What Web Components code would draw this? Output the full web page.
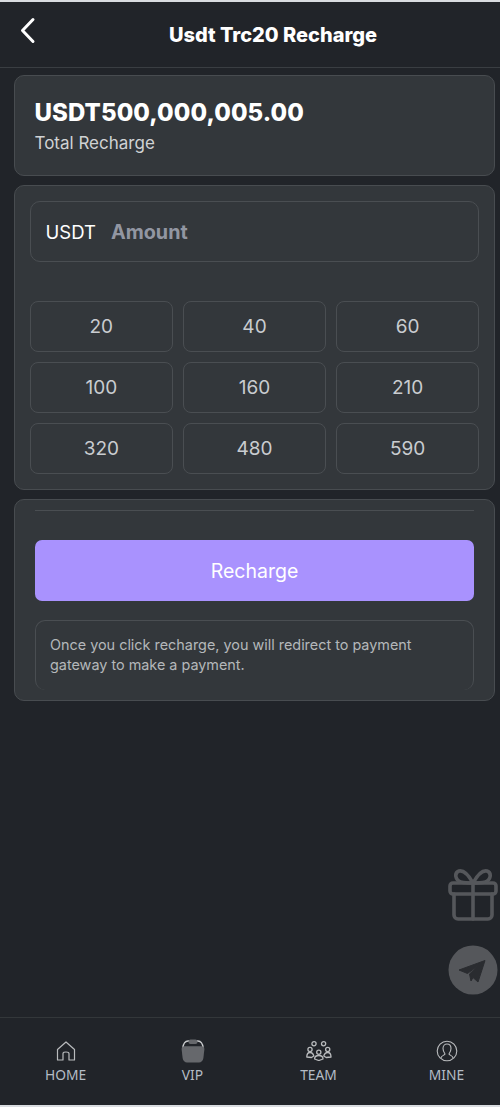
<!DOCTYPE html>
<html>
<head>
<meta charset="utf-8">
<title>Usdt Trc20 Recharge</title>
<style>
    html, body { margin: 0; padding: 0; height: 100%; background: #212429; }
    body { font-family: "Inter", "Roboto", "Liberation Sans", sans-serif; }
</style>
</head>
<body>
<recharge-app>
    <top-bar>Usdt Trc20 Recharge</top-bar>
    <total-card amount="USDT500,000,005.00" label="Total Recharge"></total-card>
    <amount-card values="20,40,60,100,160,210,320,480,590"></amount-card>
    <pay-card>Once you click recharge, you will redirect to payment gateway to make a payment.</pay-card>
    <float-links></float-links>
    <bottom-nav></bottom-nav>
</recharge-app>

<script>
    const cardCss = `
        .card {
            background: #33373b;
            border: 1px solid #484c50;
            border-radius: 10px;
            box-sizing: border-box;
        }
    `;

    class RechargeApp extends HTMLElement {
        constructor() {
            super();
            this.attachShadow({ mode: 'open' });
            this.shadowRoot.innerHTML = `
                <style>
                    :host {
                        display: flex;
                        flex-direction: column;
                        position: relative;
                        box-sizing: border-box;
                        width: 500px;
                        height: 1107px;
                        overflow: hidden;
                        background: #212429;
                        border-top: 2px solid #d9dce0;
                        border-bottom: 2px solid #d9dce0;
                    }
                </style>
                <slot></slot>
            `;
        }
    }

    class TopBar extends HTMLElement {
        constructor() {
            super();
            this.attachShadow({ mode: 'open' });
            this.shadowRoot.innerHTML = `
                <style>
                    :host {
                        display: flex;
                        flex: none;
                        align-items: center;
                        justify-content: center;
                        position: relative;
                        box-sizing: border-box;
                        height: 66px;
                        border-bottom: 1px solid #3a3e42;
                        color: #fff;
                        font: 800 20px "Inter", sans-serif;
                        padding-left: 46px;
                    }
                    svg { position: absolute; left: 18px; top: 15px; }
                </style>
                <svg width="18" height="28" viewBox="0 0 18 28" fill="none" stroke="#fff" stroke-width="3" stroke-linecap="round" stroke-linejoin="round">
                    <path d="M15 2.5 L4.5 13.5 L15 24.5"/>
                </svg>
                <slot></slot>
            `;
        }
    }

    class TotalCard extends HTMLElement {
        constructor() {
            super();
            this.attachShadow({ mode: 'open' });
        }
        connectedCallback() {
            this.shadowRoot.innerHTML = `
                <style>
                    ${cardCss}
                    :host { display: block; flex: none; margin: 7px 5px 0 14px; }
                    .card { height: 101px; padding: 22px 20px 0; }
                    .amount { color: #fff; font: 800 24px/30px "Inter", sans-serif; letter-spacing: 0.08px; margin-left: -0.5px; }
                    .label { color: #d0d2d4; font: 400 17px/22px "Inter", sans-serif; margin: 4px 0 0 -0.5px; }
                </style>
                <div class="card">
                    <div class="amount">${this.getAttribute('amount')}</div>
                    <div class="label">${this.getAttribute('label')}</div>
                </div>
            `;
        }
    }

    class AmountCard extends HTMLElement {
        constructor() {
            super();
            this.attachShadow({ mode: 'open' });
        }
        connectedCallback() {
            const values = this.getAttribute('values').split(',');
            const chips = values.map(v => `<div class="chip">${v}</div>`).join('');
            this.shadowRoot.innerHTML = `
                <style>
                    ${cardCss}
                    :host { display: block; flex: none; margin: 9px 5px 0 14px; }
                    .card { height: 305px; padding: 15px; }
                    .input {
                        display: flex;
                        align-items: center;
                        gap: 15px;
                        box-sizing: border-box;
                        height: 61px;
                        padding: 0 14.5px;
                        border: 1px solid #4a4e52;
                        border-radius: 10px;
                    }
                    .unit { color: #fff; font: 400 18.5px "Inter", sans-serif; }
                    .hint { color: #9296a2; font: 700 19.8px "Inter", sans-serif; }
                    .chips {
                        display: grid;
                        grid-template-columns: repeat(3, 1fr);
                        gap: 10px 10.5px;
                        margin-top: 39px;
                    }
                    .chip {
                        display: flex;
                        align-items: center;
                        justify-content: center;
                        box-sizing: border-box;
                        height: 51px;
                        border: 1px solid #4a4e52;
                        border-radius: 8px;
                        color: #c9ccd0;
                        font: 400 19px "Inter", sans-serif;
                    }
                </style>
                <div class="card">
                    <div class="input"><span class="unit">USDT</span><span class="hint">Amount</span></div>
                    <div class="chips">${chips}</div>
                </div>
            `;
        }
    }

    class PayCard extends HTMLElement {
        constructor() {
            super();
            this.attachShadow({ mode: 'open' });
            this.shadowRoot.innerHTML = `
                <style>
                    ${cardCss}
                    :host { display: block; flex: none; margin: 9px 5px 0 14px; }
                    .card { height: 202px; padding: 10px 20px 0; }
                    hr { border: 0; border-top: 1px solid #4a4e52; margin: 0; }
                    .btn {
                        display: flex;
                        align-items: center;
                        justify-content: center;
                        height: 61px;
                        margin-top: 29px;
                        background: #a992fe;
                        border-radius: 7px;
                        color: #fff;
                        font: 400 19.5px "Inter", sans-serif;
                    }
                    .note {
                        box-sizing: border-box;
                        height: 70px;
                        margin-top: 19px;
                        padding: 14px 14px 0;
                        border: 1px solid #4a4e52;
                        border-bottom: 0;
                        border-radius: 10px;
                        color: #b4b7ba;
                        font: 400 14.4px/20px "Inter", sans-serif;
                    }
                </style>
                <div class="card">
                    <hr>
                    <div class="btn">Recharge</div>
                    <div class="note"><slot></slot></div>
                </div>
            `;
        }
    }

    class FloatLinks extends HTMLElement {
        constructor() {
            super();
            this.attachShadow({ mode: 'open' });
            this.shadowRoot.innerHTML = `
                <style>
                    :host {
                        position: absolute;
                        left: 448px;
                        top: 866px;
                        display: flex;
                        flex-direction: column;
                        gap: 23px;
                    }
                    svg { display: block; }
                </style>
                <svg width="50" height="54" viewBox="0 0 50 54" fill="none" stroke="#55575b" stroke-width="3.6" stroke-linecap="round" stroke-linejoin="round">
                    <rect x="2" y="15" width="46" height="11" rx="3"/>
                    <path d="M6 26 V47 a4 4 0 0 0 4 4 H40 a4 4 0 0 0 4 -4 V26"/>
                    <path d="M25 15 V51"/>
                    <path d="M25 15 C20 6 15 2 11 3 C6 5 7 12 13 14 C17 15 21 15 25 15 C29 15 33 15 37 14 C43 12 44 5 39 3 C35 2 30 6 25 15 Z"/>
                </svg>
                <svg width="50" height="50" viewBox="0 0 50 50">
                    <circle cx="25" cy="25" r="24.5" fill="#55575b"/>
                    <path d="M11 25 L37 15.5 L30 37 L25 32.5 L23 36 L21.5 29 L31 20 L19.5 28.5 Z" fill="#2a2c30" stroke="#2a2c30" stroke-width="1" stroke-linejoin="round"/>
                </svg>
            `;
        }
    }

    class BottomNav extends HTMLElement {
        constructor() {
            super();
            this.attachShadow({ mode: 'open' });
            const icons = {
                HOME: `<svg width="20" height="20" viewBox="0 0 20 20" fill="none" stroke="#b9bbbd" stroke-width="1.2" stroke-linejoin="round">
                        <path d="M1.5 8.5 L10 1 L18.5 8.5 V19 H13 V12.5 C13 10.5 7 10.5 7 12.5 V19 H1.5 Z"/></svg>`,
                VIP: `<svg width="24" height="24" viewBox="0 0 24 24">
                        <path d="M1.8 9 C2.5 3.5 4 2 7 2 H17 C20 2 21.5 3.5 22.2 9" fill="none" stroke="#c8cacc" stroke-width="1.3"/>
                        <rect x="7.5" y="0.5" width="9" height="4.5" rx="2" fill="#66686c"/>
                        <path d="M0.6 10 C0.6 8 2 7.2 3.5 7.2 H20.5 C22 7.2 23.4 8 23.4 10 L22.4 19 C22 22 20 23.4 18 23.4 H6 C4 23.4 2 22 1.6 19 Z" fill="#66686c"/></svg>`,
                TEAM: `<svg width="26" height="20" viewBox="0 0 26 20" fill="none" stroke="#b9bbbd" stroke-width="1.3" stroke-linejoin="round">
                        <circle cx="8" cy="2.8" r="2.1"/><circle cx="17.6" cy="2.8" r="2.1"/>
                        <circle cx="4" cy="8.5" r="2.1"/><circle cx="21.7" cy="8.5" r="2.1"/><circle cx="12.8" cy="11.3" r="2.1"/>
                        <path d="M0.8 16 C0.8 12.5 2.5 11.5 4 11.5 C5.5 11.5 7.2 12.5 7.8 15 L5.5 16.5 Z"/>
                        <path d="M25 16 C25 12.5 23.2 11.5 21.7 11.5 C20.2 11.5 18.5 12.5 17.8 15 L20.2 16.5 Z"/>
                        <path d="M8.6 18 C8.6 15.5 10.8 14.5 12.8 14.5 C14.8 14.5 17 15.5 17 18 L12.8 19.5 Z"/></svg>`,
                MINE: `<svg width="22" height="22" viewBox="0 0 22 22" fill="none" stroke="#b9bbbd" stroke-width="1.1">
                        <circle cx="11" cy="11" r="9.8"/>
                        <path d="M5 18 C5 15.5 8.5 15.5 9 14 C8 12.5 7 10.5 7 8.5 C7 5.5 9 4 11 4 C13 4 15 5.5 15 8.5 C15 10.5 14 12.5 13 14 C13.5 15.5 17 15.5 17 18"/></svg>`
            };
            const items = Object.keys(icons).map(name => `
                <div class="item"><div class="icon">${icons[name]}</div><span>${name}</span></div>
            `).join('');
            this.shadowRoot.innerHTML = `
                <style>
                    :host {
                        display: grid;
                        grid-template-columns: 127px 127px 125px 131px;
                        flex: none;
                        box-sizing: border-box;
                        height: 88px;
                        margin-top: auto;
                        padding-left: 2px;
                        border-top: 1px solid #33373a;
                    }
                    .item {
                        display: flex;
                        flex-direction: column;
                        align-items: center;
                        padding-top: 21px;
                        color: #b4bcc6;
                        font: 400 13.8px/18px "Noto Sans", sans-serif;
                    }
                    .icon { display: flex; align-items: center; justify-content: center; height: 24px; margin-bottom: 3px; }
                </style>
                ${items}
            `;
        }
    }

    customElements.define('recharge-app', RechargeApp);
    customElements.define('top-bar', TopBar);
    customElements.define('total-card', TotalCard);
    customElements.define('amount-card', AmountCard);
    customElements.define('pay-card', PayCard);
    customElements.define('float-links', FloatLinks);
    customElements.define('bottom-nav', BottomNav);
</script>
</body>
</html>
